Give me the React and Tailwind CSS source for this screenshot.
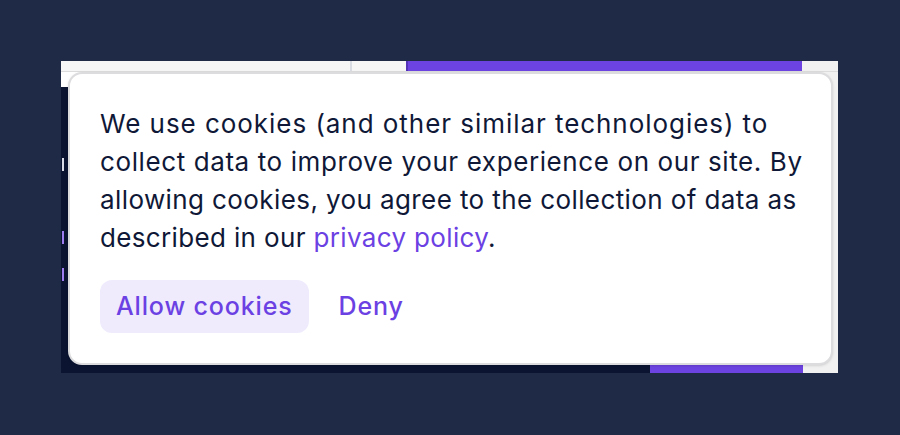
import React from 'react';

const CookieDialog = () => (
  <div className="absolute left-[7px] top-[11px] w-[765px] h-[293px] bg-white rounded-[14px] border-2 border-[#dcdcde] shadow-sm px-[30px] pt-[31px]">
    <p className="text-[26px] leading-[38px] text-[#0f1837] whitespace-nowrap">
      <span className="tracking-[0.95px]">We use cookies (and other similar technologies) to</span>
      <br />
      <span className="tracking-[0.6px]">collect data to improve your experience on our site. By</span>
      <br />
      <span className="tracking-[0.4px]">allowing cookies, you agree to the collection of data as</span>
      <br />
      <span className="tracking-[0.35px]">
        described in our <a href="#" className="text-[#6b41e3]">privacy policy</a>.
      </span>
    </p>
    <div className="flex items-center gap-[10px] mt-[23px]">
      <button className="h-[53px] px-[16px] rounded-[12px] bg-[#efebfd] text-[#6b41e3] text-[25px] font-medium tracking-[0.85px]">
        Allow cookies
      </button>
      <button className="h-[53px] px-[20px] rounded-[12px] text-[#6b41e3] text-[25px] font-medium tracking-[0.85px]">
        Deny
      </button>
    </div>
  </div>
);

export default function App() {
  return (
    <div className="w-[900px] h-[435px] bg-[#1e2a46] p-[61px]" style={{ fontFamily: 'Inter, "Noto Sans", sans-serif' }}>
      <div className="relative w-[777px] h-[312px] bg-[#f1f1f1] overflow-hidden flex flex-col">
        <div className="flex h-[11px] shrink-0 border-b border-[#dcdcdc]">
          <div className="w-[289px] bg-[#f6f6f6]" />
          <div className="w-[2px] bg-[#d9dde3]" />
          <div className="w-[54px] bg-[#f6f6f6]" />
          <div className="w-[2px] bg-[#5533b8]" />
          <div className="w-[394px] bg-[#6c43e0]" />
          <div className="flex-1 bg-[#f1f1f1]" />
        </div>
        <div className="flex flex-1">
          <div className="w-[589px] flex flex-col">
            <div className="h-[15px] bg-white" />
            <div className="flex-1 bg-[#0b1532] flex flex-col pt-[71px]">
              <div className="w-[2px] h-[13px] ml-[1px] bg-[#d8dbe6]" />
              <div className="w-[2px] h-[13px] ml-[1px] mt-[60px] bg-[#9d7cf0]" />
              <div className="w-[2px] h-[13px] ml-[1px] mt-[24px] bg-[#9d7cf0]" />
            </div>
          </div>
          <div className="w-[153px] flex flex-col">
            <div className="flex-1 bg-[#f1f1f1]" />
            <div className="h-[10px] bg-[#6c43e0]" />
          </div>
          <div className="flex-1 bg-[#f1f1f1]" />
        </div>
        <CookieDialog />
      </div>
    </div>
  );
}
